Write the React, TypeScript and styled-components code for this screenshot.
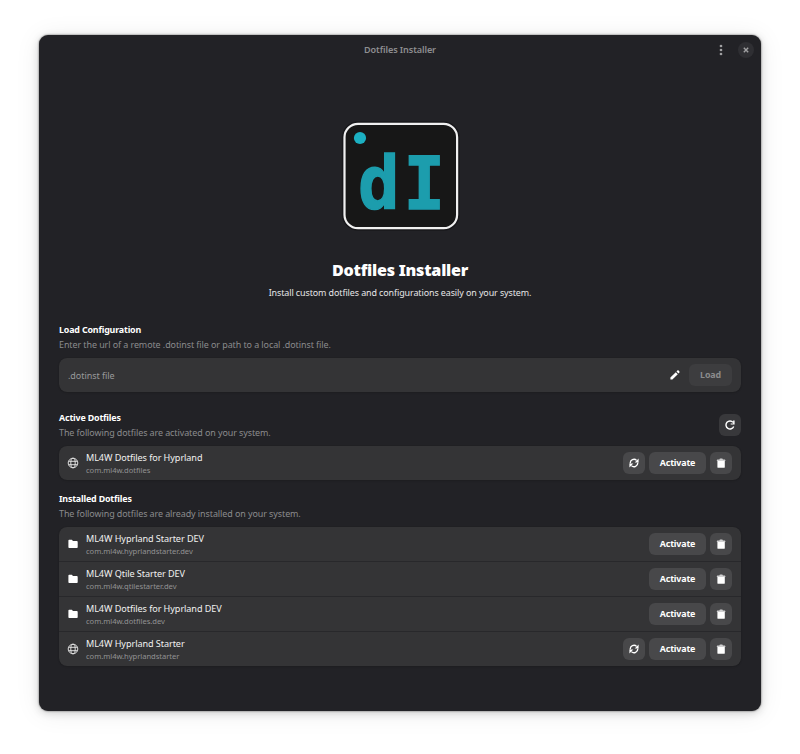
import React from 'react';
import styled, { createGlobalStyle } from 'styled-components';

const GlobalStyle = createGlobalStyle`
  * { box-sizing: border-box; }
  body {
    margin: 0;
    background: #fff;
    font-family: "Noto Sans", "Open Sans", sans-serif;
  }
  button, input { font: inherit; color: inherit; border: 0; padding: 0; }
`;

const Desktop = styled.div`
  height: 754px;
  padding: 35px 39px 43px;
  overflow: hidden;
`;

const Window = styled.main`
  height: 676px;
  border-radius: 9px;
  background: #222226;
  color: #fff;
  box-shadow: 0 0 2px rgba(0, 0, 0, 0.65), 0 2px 8px rgba(0, 0, 0, 0.16), 0 2px 26px rgba(0, 0, 0, 0.08);
`;

const HeaderBar = styled.header`
  height: 29px;
  padding: 0 7px;
  display: grid;
  grid-template-columns: 1fr auto 1fr;
  align-items: center;
`;

const WindowTitle = styled.h1`
  grid-column: 2;
  margin: 0;
  font-size: 9.1px;
  font-weight: 600;
  letter-spacing: -0.1px;
  line-height: 13px;
  padding-bottom: 1px;
  color: #8e8e90;
`;

const WindowControls = styled.div`
  display: flex;
  align-items: center;
  justify-content: flex-end;
  gap: 9px;
`;

const ControlButton = styled.button<{ $filled?: boolean }>`
  display: grid;
  place-items: center;
  width: 16px;
  height: 16px;
  border-radius: 50%;
  background: ${(p) => (p.$filled ? '#2f2f33' : 'transparent')};
  color: #a0a0a2;
`;

const Hero = styled.section`
  display: flex;
  flex-direction: column;
  align-items: center;
  padding-top: 54px;
`;

const HeroTitle = styled.h2`
  margin: 24px 0 0;
  font-size: 16.1px;
  font-weight: 900;
  letter-spacing: -0.24px;
  line-height: 24px;
`;

const HeroText = styled.p`
  margin: 4px 0 0;
  font-size: 8.95px;
  letter-spacing: -0.1px;
  line-height: 14px;
  color: #e6e6e7;
`;

const Content = styled.div`
  padding: 0 20px;
`;

const Section = styled.section<{ $top: number }>`
  margin-top: ${(p) => p.$top}px;
`;

const SectionHead = styled.div`
  display: flex;
  justify-content: space-between;
  align-items: center;
  height: 30px;
`;

const SectionTitle = styled.h3`
  margin: 0;
  font-size: 8.9px;
  font-weight: 700;
  letter-spacing: -0.17px;
  line-height: 15px;
`;

const SectionText = styled.p`
  margin: 0;
  font-size: 8.95px;
  letter-spacing: -0.075px;
  line-height: 15px;
  color: #8b8b8d;
`;

const Card = styled.div<{ $gap: number }>`
  margin-top: ${(p) => p.$gap}px;
  border-radius: 8px;
  background: #343436;
  box-shadow: 0 0 1px rgba(0, 0, 0, 0.3), 0 1px 2px rgba(0, 0, 0, 0.12);
`;

const Row = styled.div`
  display: flex;
  align-items: center;
  height: 34px;
  padding: 0 9px;
  & + & {
    height: 35px;
    border-top: 1px solid #28282b;
  }
`;

const RowIcon = styled.span`
  display: flex;
  align-items: center;
  justify-content: center;
  width: 12px;
  margin: 0 7px 0 -1px;
`;

const RowBody = styled.div`
  flex: 1;
  padding-top: 1px;
`;

const RowTitle = styled.div`
  font-size: 9.1px;
  letter-spacing: -0.07px;
  line-height: 13px;
  color: #f1f1f1;
`;

const RowSubtitle = styled.div`
  font-size: 7.6px;
  letter-spacing: -0.04px;
  line-height: 12px;
  color: #929293;
`;

const Actions = styled.div`
  display: flex;
  gap: 4px;
`;

const Button = styled.button<{ $tone?: 'flat' | 'disabled' }>`
  display: grid;
  place-items: center;
  height: 22px;
  min-width: 22px;
  border-radius: 6px;
  font-size: 8.9px;
  font-weight: 700;
  letter-spacing: -0.16px;
  line-height: 14px;
  background: ${(p) => (p.$tone === 'flat' ? '#38383b' : p.$tone === 'disabled' ? '#3d3d3f' : '#48484a')};
  color: ${(p) => (p.$tone === 'disabled' ? '#8b8b8c' : '#fff')};
`;

const ActivateButton = styled(Button)`
  width: 57px;
`;

const LoadButton = styled(Button)`
  width: 43px;
  margin-left: 9.5px;
`;

const UrlInput = styled.input`
  flex: 1;
  min-width: 0;
  background: transparent;
  font-size: 9px;
  letter-spacing: -0.05px;
  outline: none;
  &::placeholder { color: #99999a; opacity: 1; }
`;

const Logo = () => (
  <svg width="124" height="116" viewBox="338 118 124 116">
    <rect x="342.6" y="122" width="116.4" height="108" rx="15.5" fill="none" stroke="#000" strokeOpacity=".3" strokeWidth="1.6" />
    <rect x="344.5" y="123.8" width="112.6" height="104.4" rx="13.5" fill="#171717" stroke="#f0f0f0" strokeWidth="2.2" />
    <circle cx="360" cy="138" r="6.1" fill="#1cb0c2" />
    <text
      transform="translate(358.1 208.6) scale(.94 .99)"
      fontFamily='"DejaVu Sans Mono", monospace'
      fontWeight="700"
      fontSize="73.4"
      letterSpacing="4.2"
      fill="#1c9dad"
      stroke="#1c9dad"
      strokeWidth="1.4"
    >
      dI
    </text>
  </svg>
);

const MenuIcon = () => (
  <svg width="4" height="12" viewBox="0 0 4 12" fill="currentColor">
    <circle cx="2" cy="2" r="1.35" />
    <circle cx="2" cy="6" r="1.35" />
    <circle cx="2" cy="10" r="1.35" />
  </svg>
);

const CloseIcon = () => (
  <svg width="6" height="6" viewBox="0 0 6 6" stroke="currentColor" strokeWidth="1.4">
    <path d="M.8.8l4.4 4.4M5.2.8L.8 5.2" />
  </svg>
);

const PencilIcon = () => (
  <svg width="10" height="10" viewBox="0 0 10 10" fill="#fff">
    <path d="M.4 9.6V7.6L5.8 2.2l2 2L2.4 9.6zM6.5 1.5L7.4.6c.4-.4.8-.4 1.2 0l.8.8c.4.4.4.8 0 1.2l-.9.9z" />
  </svg>
);

const ReloadIcon = () => (
  <svg width="10" height="10" viewBox="0 0 10 10" fill="none" stroke="#fff" strokeWidth="1.4">
    <path d="M8.7 6.5A4 4 0 1 1 8.1 2.4" />
    <path d="M9.6.6v4H5.7V3.4h2.4V.6z" fill="#fff" stroke="none" />
  </svg>
);

const SyncIcon = () => (
  <svg width="10" height="10" viewBox="0 0 10 10" fill="none" stroke="#fff" strokeWidth="1.3">
    <path d="M1.3 5.4A3.7 3.7 0 0 1 7.6 2.4M8.7 4.6A3.7 3.7 0 0 1 2.4 7.6" />
    <path d="M9.6.5v3.9H5.7zM.4 9.5V5.6h3.9z" fill="#fff" stroke="none" />
  </svg>
);

const TrashIcon = () => (
  <svg width="10" height="10" viewBox="0 0 10 10" fill="#fff">
    <path d="M.8 3h8.6v-.5c0-.7-.4-1.1-1-1.1H6.9C6.8.8 6.5.5 6 .5H4.3c-.5 0-.8.3-.9.9H1.8c-.6 0-1 .4-1 1.1z" fill="#d0d0d1" />
    <path d="M1.4 3h7.4v5.9c0 .6-.4.9-.9.9H2.3c-.5 0-.9-.3-.9-.9z" />
  </svg>
);

const FolderIcon = () => (
  <svg width="10" height="10" viewBox="0 0 10 10" fill="#fff">
    <path d="M.4 1.8C.4 1.2.8.8 1.5.8h2.3l1.2 1.3h3.6c.7 0 1.1.4 1.1 1.1v4.9c0 .7-.4 1-1.1 1H1.5c-.7 0-1.1-.3-1.1-1z" />
  </svg>
);

const GlobeIcon = () => (
  <svg width="12" height="12" viewBox="0 0 12 12" fill="none" stroke="#e4e4e4" strokeWidth=".95">
    <circle cx="6" cy="6" r="4.8" />
    <ellipse cx="6" cy="6" rx="2.2" ry="4.8" />
    <path d="M1.7 4.3h8.6M1.7 7.7h8.6" />
  </svg>
);

interface Dotfiles {
  name: string;
  id: string;
  remote?: boolean;
}

const active: Dotfiles = { name: 'ML4W Dotfiles for Hyprland', id: 'com.ml4w.dotfiles', remote: true };

const installed: Dotfiles[] = [
  { name: 'ML4W Hyprland Starter DEV', id: 'com.ml4w.hyprlandstarter.dev' },
  { name: 'ML4W Qtile Starter DEV', id: 'com.ml4w.qtilestarter.dev' },
  { name: 'ML4W Dotfiles for Hyprland DEV', id: 'com.ml4w.dotfiles.dev' },
  { name: 'ML4W Hyprland Starter', id: 'com.ml4w.hyprlandstarter', remote: true },
];

const DotfilesRow = ({ name, id, remote }: Dotfiles) => (
  <Row>
    <RowIcon>{remote ? <GlobeIcon /> : <FolderIcon />}</RowIcon>
    <RowBody>
      <RowTitle>{name}</RowTitle>
      <RowSubtitle>{id}</RowSubtitle>
    </RowBody>
    <Actions>
      {remote && <Button aria-label="Update"><SyncIcon /></Button>}
      <ActivateButton>Activate</ActivateButton>
      <Button aria-label="Delete"><TrashIcon /></Button>
    </Actions>
  </Row>
);

export default function App() {
  return (
    <Desktop>
      <GlobalStyle />
      <Window>
        <HeaderBar>
          <WindowTitle>Dotfiles Installer</WindowTitle>
          <WindowControls>
            <ControlButton aria-label="Menu"><MenuIcon /></ControlButton>
            <ControlButton $filled aria-label="Close"><CloseIcon /></ControlButton>
          </WindowControls>
        </HeaderBar>
        <Hero>
          <Logo />
          <HeroTitle>Dotfiles Installer</HeroTitle>
          <HeroText>Install custom dotfiles and configurations easily on your system.</HeroText>
        </Hero>
        <Content>
          <Section $top={22}>
            <SectionHead>
              <div>
                <SectionTitle>Load Configuration</SectionTitle>
                <SectionText>Enter the url of a remote .dotinst file or path to a local .dotinst file.</SectionText>
              </div>
            </SectionHead>
            <Card $gap={6}>
              <Row>
                <UrlInput placeholder=".dotinst file" />
                <PencilIcon />
                <LoadButton $tone="disabled">Load</LoadButton>
              </Row>
            </Card>
          </Section>
          <Section $top={18}>
            <SectionHead>
              <div>
                <SectionTitle>Active Dotfiles</SectionTitle>
                <SectionText>The following dotfiles are activated on your system.</SectionText>
              </div>
              <Button $tone="flat" aria-label="Reload"><ReloadIcon /></Button>
            </SectionHead>
            <Card $gap={6}>
              <DotfilesRow {...active} />
            </Card>
          </Section>
          <Section $top={11}>
            <SectionHead>
              <div>
                <SectionTitle>Installed Dotfiles</SectionTitle>
                <SectionText>The following dotfiles are already installed on your system.</SectionText>
              </div>
            </SectionHead>
            <Card $gap={6}>
              {installed.map((d) => <DotfilesRow key={d.id} {...d} />)}
            </Card>
          </Section>
        </Content>
      </Window>
    </Desktop>
  );
}
